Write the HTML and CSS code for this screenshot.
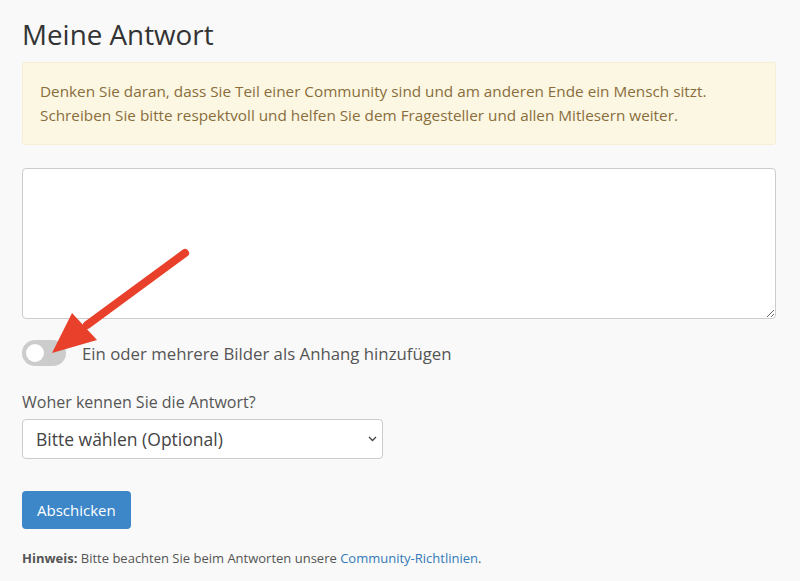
FILE: index.html
```html
<!DOCTYPE html>
<html lang="de">
<head>
<meta charset="UTF-8">
<title>Meine Antwort</title>
<link rel="stylesheet" href="styles.css">
</head>
<body>
<div class="answer">
  <h2>Meine Antwort</h2>

  <div class="notice">
    Denken Sie daran, dass Sie Teil einer Community sind und am anderen Ende ein Mensch sitzt.<br>
    Schreiben Sie bitte respektvoll und helfen Sie dem Fragesteller und allen Mitlesern weiter.
  </div>

  <textarea class="editor"></textarea>

  <label class="toggle-row">
    <span class="toggle"><span class="knob"></span></span>
    <span class="toggle-text">Ein oder mehrere Bilder als Anhang hinzufügen</span>
  </label>

  <label class="field-label" for="source">Woher kennen Sie die Antwort?</label>
  <div class="select-wrap">
    <select id="source">
      <option>Bitte wählen (Optional)</option>
    </select>
    <svg class="chevron" width="9" height="6" viewBox="0 0 9 6"><path d="M1 1l3.5 3.5 3.5-3.5" fill="none" stroke="#444" stroke-width="1.3"/></svg>
  </div>

  <button type="submit">Abschicken</button>

  <p class="hint"><b>Hinweis:</b> Bitte beachten Sie beim Antworten unsere <a href="#">Community-Richtlinien</a>.</p>

  <!-- rote Markierung aus dem Screenshot -->
  <svg class="marker" width="200" height="130" viewBox="0 0 200 130">
    <line x1="168" y1="18" x2="70" y2="90" stroke="#e8402a" stroke-width="8" stroke-linecap="round"/>
    <polygon points="35,118 55,78 80,105" fill="#e8402a"/>
  </svg>
</div>
</body>
</html>
```

FILE: styles.css
```css
body {
  font-family: "Open Sans", sans-serif;
  background: #f9f9f9;
  margin: 0;
  color: #333;
}
.answer {
  position: relative;
  padding: 14px 24px 0 22px;
  display: flex;
  flex-direction: column;
  align-items: flex-start;
}
h2 {
  font-size: 27.8px;
  font-weight: 400;
  margin: 0 0 8px;
  line-height: 40px;
  color: #333;
}
.notice {
  box-sizing: border-box;
  width: 100%;
  background: #fbf7e3;
  border: 1px solid #f6efd6;
  border-radius: 3px;
  color: #8a6d3b;
  font-size: 15.3px;
  line-height: 24px;
  padding: 16px 17px 17px;
}
.editor {
  box-sizing: border-box;
  width: 100%;
  height: 151px;
  margin-top: 23px;
  background: #fff;
  border: 1px solid #ccc;
  border-radius: 4px;
  resize: vertical;
}
.toggle-row {
  display: flex;
  align-items: center;
  gap: 16px;
  margin-top: 21px;
}
.toggle {
  width: 44px;
  height: 26px;
  border-radius: 13px;
  background: #ccc;
  display: flex;
  align-items: center;
  padding-left: 4px;
  box-sizing: border-box;
}
.knob {
  width: 18px;
  height: 18px;
  border-radius: 50%;
  background: #fff;
}
.toggle-text {
  font-size: 16.8px;
  color: #555;
}
.field-label {
  font-size: 16px;
  color: #555;
  margin-top: 25px;
}
.select-wrap {
  position: relative;
  margin-top: 6px;
}
select {
  appearance: none;
  width: 361px;
  height: 40px;
  background: #fff;
  border: 1px solid #ccc;
  border-radius: 4px;
  font-family: "Open Sans", sans-serif;
  font-size: 17.5px;
  color: #444;
  padding: 0 13px;
}
.chevron {
  position: absolute;
  right: 6px;
  top: 17px;
}
button {
  margin-top: 32px;
  background: #3d87c9;
  color: #fff;
  border: none;
  border-radius: 4px;
  font-family: "Open Sans", sans-serif;
  font-size: 15px;
  height: 38px;
  padding: 0 15px;
}
.hint {
  font-size: 13px;
  color: #555;
  margin: 20px 0 0;
}
.hint a {
  color: #337ab7;
  text-decoration: none;
}
.marker {
  position: absolute;
  left: 17px;
  top: 235px;
}
```
